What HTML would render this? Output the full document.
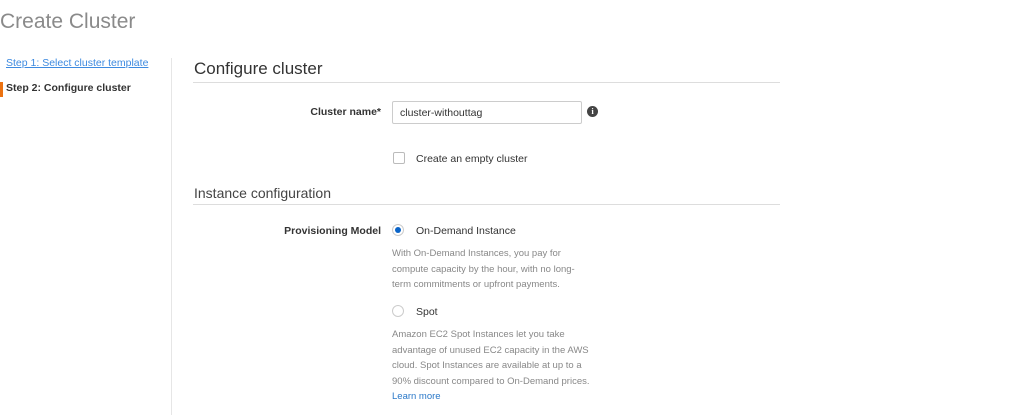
<!DOCTYPE html>
<html><head><style>
*{margin:0;padding:0;box-sizing:border-box}
body{width:1024px;height:415px;background:#fff;font-family:"Liberation Sans",Arial,sans-serif;position:relative;overflow:hidden;color:#333}
.a{position:absolute;white-space:nowrap}
.desc{font-size:9.5px;color:#888;line-height:15.7px}
</style></head><body>
<div class="a" style="left:0;top:10px;font-size:21px;color:#8a8a8a">Create Cluster</div>
<div class="a" style="left:171px;top:58px;width:1px;height:357px;background:#e6e6e6"></div>
<div class="a" style="left:6px;top:57px;font-size:10.5px;color:#3d8ae0;text-decoration:underline">Step 1: Select cluster template</div>
<div class="a" style="left:0;top:82px;width:3px;height:15px;background:#ec7211"></div>
<div class="a" style="left:6px;top:82px;font-size:10.5px;font-weight:bold;color:#333">Step 2: Configure cluster</div>
<div class="a" style="left:194px;top:59px;font-size:17px;color:#333">Configure cluster</div>
<div class="a" style="left:193px;top:82px;width:587px;height:1px;background:#ddd"></div>
<div class="a" style="left:281px;width:100px;text-align:right;top:106px;font-size:10.5px;font-weight:bold">Cluster name*</div>
<div class="a" style="left:392px;top:101px;width:190px;height:23px;border:1px solid #ccc;border-radius:2px;font-size:10.5px;padding:5px 0 0 7px">cluster-withouttag</div>
<div class="a" style="left:587px;top:106px;width:11px;height:11px;border-radius:50%;background:#444;color:#fff;font-size:8.5px;font-weight:bold;text-align:center;line-height:11px;font-family:'Liberation Serif',serif">i</div>
<div class="a" style="left:393px;top:152px;width:12px;height:12px;border:1px solid #bbb;border-radius:2px"></div>
<div class="a" style="left:416px;top:153px;font-size:10.5px">Create an empty cluster</div>
<div class="a" style="left:194px;top:185px;font-size:14px;color:#444">Instance configuration</div>
<div class="a" style="left:193px;top:204px;width:587px;height:1px;background:#ddd"></div>
<div class="a" style="left:251px;width:130px;text-align:right;top:225px;font-size:10.5px;font-weight:bold">Provisioning Model</div>
<div class="a" style="left:392px;top:224px;width:12px;height:12px;border-radius:50%;border:1px solid #ccc;background:#fff"><div style="position:absolute;left:2px;top:2px;width:6px;height:6px;border-radius:50%;background:#0a64c8"></div></div>
<div class="a" style="left:416px;top:225px;font-size:10.5px">On-Demand Instance</div>
<div class="a desc" style="left:392px;top:246px">With On-Demand Instances, you pay for<br>compute capacity by the hour, with no long-<br>term commitments or upfront payments.</div>
<div class="a" style="left:392px;top:305px;width:12px;height:12px;border-radius:50%;border:1px solid #ccc"></div>
<div class="a" style="left:416px;top:306px;font-size:10.5px">Spot</div>
<div class="a desc" style="left:392px;top:327px">Amazon EC2 Spot Instances let you take<br>advantage of unused EC2 capacity in the AWS<br>cloud. Spot Instances are available at up to a<br>90% discount compared to On-Demand prices.</div>
<div class="a" style="left:392px;top:391px;font-size:9.5px;color:#2a78c8">Learn more</div>
</body></html>
